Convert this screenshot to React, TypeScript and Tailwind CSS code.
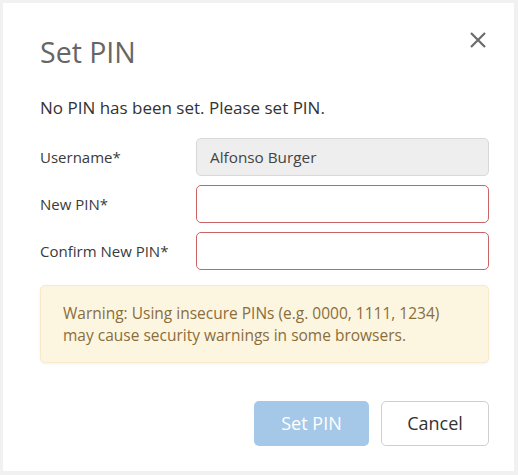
import React from 'react'

const font = { fontFamily: '"Open Sans", "Noto Sans", sans-serif' }

function Row({ label, children }: { label: string; children: React.ReactNode }) {
  return (
    <div className="flex h-[38px] items-center">
      <label className="w-[156px] shrink-0 text-[15px] leading-[22px] text-[#3a3a3a]">{label}</label>
      {children}
    </div>
  )
}

export default function App() {
  return (
    <div className="min-h-[475px] w-[518px] bg-[#f1f1f1] pb-[4px] pl-[3px] pr-[4px] pt-[3px]" style={font}>
      <div className="relative bg-white pb-[25px] pl-[37px] pr-[25px] pt-[30px]">
        <button className="absolute right-[28px] top-[29px] text-[#6b6b6b]" aria-label="Close">
          <svg width="16" height="16" viewBox="0 0 16 16" fill="none" stroke="currentColor" strokeWidth="2.2">
            <path d="M1 1 15 15M15 1 1 15" />
          </svg>
        </button>

        <h2 className="text-[28.5px] leading-[38px] text-[#666]">Set PIN</h2>
        <p className="mt-[25px] text-[17px] leading-[24px] text-[#333]">No PIN has been set. Please set PIN.</p>

        <div className="mt-[18px] flex flex-col gap-[9px]">
          <Row label="Username*">
            <div className="flex h-full flex-1 items-center rounded-[5px] border border-[#d8d8d8] bg-[#eeeeee] px-[13px] text-[15.3px] text-[#444]">
              Alfonso Burger
            </div>
          </Row>
          <Row label="New PIN*">
            <input type="password" className="h-full flex-1 rounded-[5px] border border-[#c96464] bg-white px-[13px] outline-none" />
          </Row>
          <Row label="Confirm New PIN*">
            <input type="password" className="h-full flex-1 rounded-[5px] border border-[#c96464] bg-white px-[13px] outline-none" />
          </Row>
        </div>

        <div className="mt-[15px] rounded-[5px] border border-[#f5ebc9] bg-[#fcf6e1] px-[22px] py-[16px] text-[15.5px] leading-[22px] text-[#8a6d3b] shadow-[0_1px_3px_rgba(0,0,0,0.06)]">
          Warning: Using insecure PINs (e.g. 0000, 1111, 1234)
          <br />
          may cause security warnings in some browsers.
        </div>

        <div className="mt-[38px] flex justify-end gap-[12px]">
          <button className="h-[45px] w-[115px] rounded-[5px] bg-[#a5c8e8] text-[18px] text-white">Set PIN</button>
          <button className="h-[45px] w-[108px] rounded-[5px] border border-[#cfcfcf] bg-white text-[18px] text-[#333]">Cancel</button>
        </div>
      </div>
    </div>
  )
}
